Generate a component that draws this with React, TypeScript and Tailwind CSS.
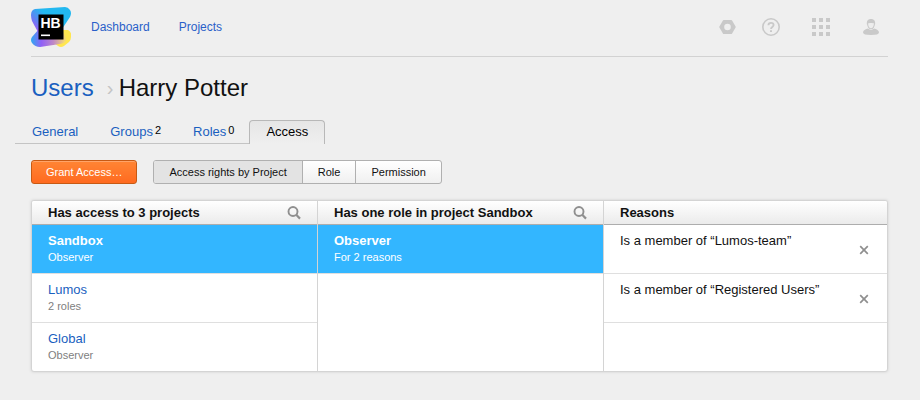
import React from "react";

const FONT = "font-['Liberation_Sans',Arial,sans-serif]";

function Logo() {
  return (
    <svg width="40" height="40" viewBox="0 0 40 40" role="img" aria-label="Hub">
      <defs>
        <linearGradient id="top" x1="0" y1="0.6" x2="0.5" y2="0.2">
          <stop offset="0" stopColor="#9a5cf8" />
          <stop offset="0.35" stopColor="#5b86f2" />
          <stop offset="0.8" stopColor="#22b8f0" />
        </linearGradient>
        <linearGradient id="bottom" x1="0" y1="0.6" x2="1" y2="0.6">
          <stop offset="0" stopColor="#2fa8f2" />
          <stop offset="0.3" stopColor="#9160f6" />
          <stop offset="0.65" stopColor="#c08ac4" />
          <stop offset="0.95" stopColor="#f3d676" />
        </linearGradient>
      </defs>
      <path d="M32 23 L37 23 Q41 25 40 30 Q40 33 38 35 L33 39 Q30 41 27 39 L22 35 Z" fill="#ffe64f" />
      <path d="M8 22 L1 30 Q-1 33 1 36 Q4 40 9 40 L29 37 Q35 36 35 32 L32 24 Z" fill="url(#bottom)" />
      <path d="M4 2 L34 0 Q37 0 39 3 Q41 6 39 10 L31 22 L18 30 L8 27 L1 14 Q0 11 0 8 Q0 3 4 2 Z" fill="url(#top)" />
      <rect x="7.500" y="7.500" width="25" height="25" fill="#000" />
      <text x="9.500" y="21" fill="#fff" fontSize="14" fontWeight="700" fontFamily="Liberation Sans, Arial, sans-serif">HB</text>
      <rect x="10" y="27.500" width="9" height="1.600" fill="#fff" />
    </svg>
  );
}

function NutIcon() {
  return (
    <svg width="18" height="18" viewBox="0 0 18 18" fill="#c9c9c9" aria-hidden="true">
      <path fillRule="evenodd" d="M5.800 2h7.400a1 1 0 0 1 .9.500l3.500 6a1 1 0 0 1 0 1l-3.500 6a1 1 0 0 1-.9.500H5.800a1 1 0 0 1-.9-.5l-3.500-6a1 1 0 0 1 0-1l3.500-6a1 1 0 0 1 .9-.5zM9.500 5.700a3.300 3.300 0 1 0 0 6.600a3.300 3.300 0 0 0 0-6.600z" />
    </svg>
  );
}

function HelpIcon() {
  return (
    <svg width="18" height="18" viewBox="0 0 18 18" fill="none" stroke="#c9c9c9" aria-hidden="true">
      <circle cx="9" cy="9" r="8.200" strokeWidth="1.600" />
      <path d="M6.400 7.200C6.400 5.700 7.500 4.800 9 4.800s2.600 1 2.600 2.300c0 1.900-2.600 1.900-2.600 4" strokeWidth="1.800" />
      <path d="M9 12.200v1.900" strokeWidth="2" />
    </svg>
  );
}

function GridIcon() {
  return (
    <svg width="18" height="18" viewBox="0 0 18 18" fill="#c9c9c9" aria-hidden="true">
      {[0, 7, 14].map((y) => [0, 7, 14].map((x) => <rect key={`${x}-${y}`} x={x} y={y} width="4" height="4" />))}
    </svg>
  );
}

function UserIcon() {
  return (
    <svg width="18" height="18" viewBox="0 0 18 18" aria-hidden="true">
      <path d="M1 14.500C1 12.300 3.500 11.300 6 10.600Q9 13.200 12 10.600C14.500 11.300 17 12.300 17 14.500Q17 17 9 17Q1 17 1 14.500z" fill="#c9c9c9" />
      <path d="M5.600 5C5.300 8.500 7.200 10.800 9 10.800s3.700-2.300 3.400-5.800" fill="#ededed" stroke="#c9c9c9" strokeWidth="1.100" />
      <path d="M5 7C4.200 3 6 1 9 1s4.800 2 4 6L12.300 5.600C11.500 4.800 6.500 4.800 5.700 5.600z" fill="#c9c9c9" />
    </svg>
  );
}

function SearchIcon() {
  return (
    <svg width="14" height="14" viewBox="0 0 14 14" fill="none" stroke="#8f8f8f" aria-hidden="true">
      <circle cx="6" cy="5.500" r="4.500" strokeWidth="1.900" />
      <path d="M9.200 8.800L13 12.600" strokeWidth="2.200" />
    </svg>
  );
}

function CloseIcon() {
  return (
    <svg width="10" height="10" viewBox="0 0 10 10" stroke="#8f8f8f" strokeWidth="1.700" aria-hidden="true">
      <path d="M1.200 1.200l7.600 7.600M8.800 1.200l-7.600 7.600" />
    </svg>
  );
}

function Column({ title, searchable, children }: { title: string; searchable?: boolean; children: React.ReactNode }) {
  return (
    <section className="border-r border-[#d4d4d4] last:border-r-0">
      <header className="flex h-6 items-center justify-between border-b border-[#adadad] bg-linear-to-b from-white to-[#ebebeb] px-4">
        <h2 className="text-[13px] leading-4 font-bold">{title}</h2>
        {searchable && (
          <button type="button" aria-label={`Search: ${title}`}>
            <SearchIcon />
          </button>
        )}
      </header>
      <ul>{children}</ul>
    </section>
  );
}

function Entry({ name, note, selected }: { name: string; note: string; selected?: boolean }) {
  return (
    <li className="border-b border-[#dfdfdf] nth-3:border-b-0">
      <button
        type="button"
        aria-pressed={!!selected}
        className={`flex h-12 w-full flex-col justify-center px-4 text-left ${selected ? "bg-[#33b6ff] text-white" : "text-[#1a5fc0]"}`}
      >
        <span className={`text-[13px] leading-4 ${selected ? "font-bold" : ""}`}>{name}</span>
        <span className={`text-[11px] leading-4 ${selected ? "" : "text-[#808080]"}`}>{note}</span>
      </button>
    </li>
  );
}

function Reason({ text }: { text: string }) {
  return (
    <li className="flex h-[49px] items-start justify-between border-b border-[#dfdfdf] pr-[18px] pl-4 text-[13px] leading-4">
      <span className="pt-2">{text}</span>
      <button type="button" className="pt-5" aria-label={`Remove: ${text}`}>
        <CloseIcon />
      </button>
    </li>
  );
}

function Tab({ label, count }: { label: string; count?: number }) {
  return (
    <a href="#" className="flex border-b border-[#c4c4c4] pt-1 pr-[15px] pl-[17px] text-[#1a5fc0]">
      {label}
      {count !== undefined && <sup className="top-0 pl-[2px] text-[11px] leading-3 text-black">{count}</sup>}
    </a>
  );
}

export default function App() {
  const segment = "border-r border-[#b0b0b0] px-[15px] last:border-r-0";
  return (
    <div className={`min-h-screen bg-[#efefef] px-8 text-[#111] ${FONT}`}>
      <div className="-ml-px">
        <header className="flex h-[57px] items-center justify-between border-b border-[#d2d2d2] pr-2 pb-[2px]">
          <div className="flex items-center">
            <a href="#">
              <Logo />
            </a>
            <nav className="flex gap-[29px] pl-5 text-[12px] leading-4 text-[#2a5fc9]">
              <a href="#">Dashboard</a>
              <a href="#">Projects</a>
            </nav>
          </div>
          <div className="flex gap-8">
            <div className="flex gap-[26px]">
              <button type="button" aria-label="Settings"><NutIcon /></button>
              <button type="button" aria-label="Help"><HelpIcon /></button>
            </div>
            <button type="button" aria-label="Services"><GridIcon /></button>
            <button type="button" aria-label="Profile"><UserIcon /></button>
          </div>
        </header>

        <h1 className="flex items-center pt-4 text-[24px] leading-[30px]">
          <a href="#" className="text-[#1a5fc0]">Users</a>
          <span className="w-[25px] pl-2 text-center text-[20px] text-[#c4c4c4]" aria-hidden="true">›</span>
          Harry Potter
        </h1>

        <nav className="mt-[17px] -ml-4 flex h-6 text-[13px] leading-4">
          <Tab label="General" />
          <Tab label="Groups" count={2} />
          <Tab label="Roles" count={0} />
          <a
            href="#"
            aria-current="page"
            className="rounded-t border border-b-0 border-[#b8b8b8] bg-linear-to-b from-[#e6e6e6] to-[#efefef] px-4 pt-[3px] text-black"
          >
            Access
          </a>
        </nav>

        <div className="flex gap-4 pt-4 text-[11px] leading-4">
          <button
            type="button"
            className="h-6 rounded-[3px] border border-[#c75a14] bg-linear-to-b from-[#ff8534] to-[#ff6a1f] px-[14px] text-white inset-shadow-[0_1px_0_#ffa468]"
          >
            Grant Access…
          </button>
          <div className="flex h-6 overflow-hidden rounded-[3px] border border-[#b0b0b0] bg-linear-to-b from-white to-[#f0f0f0]" role="group" aria-label="View">
            <button type="button" aria-pressed="true" className={`${segment} bg-[#e3e3e3]`}>Access rights by Project</button>
            <button type="button" aria-pressed="false" className={segment}>Role</button>
            <button type="button" aria-pressed="false" className={segment}>Permission</button>
          </div>
        </div>

        <main className="mt-4 grid grid-cols-[286fr_286fr_283fr] overflow-hidden rounded-[3px] border border-[#d4d4d4] bg-white shadow-[0_0_3px_#cfcfcf]">
          <Column title="Has access to 3 projects" searchable>
            <Entry name="Sandbox" note="Observer" selected />
            <Entry name="Lumos" note="2 roles" />
            <Entry name="Global" note="Observer" />
          </Column>
          <Column title="Has one role in project Sandbox" searchable>
            <Entry name="Observer" note="For 2 reasons" selected />
          </Column>
          <Column title="Reasons">
            <Reason text="Is a member of “Lumos-team”" />
            <Reason text="Is a member of “Registered Users”" />
          </Column>
        </main>
      </div>
    </div>
  );
}
